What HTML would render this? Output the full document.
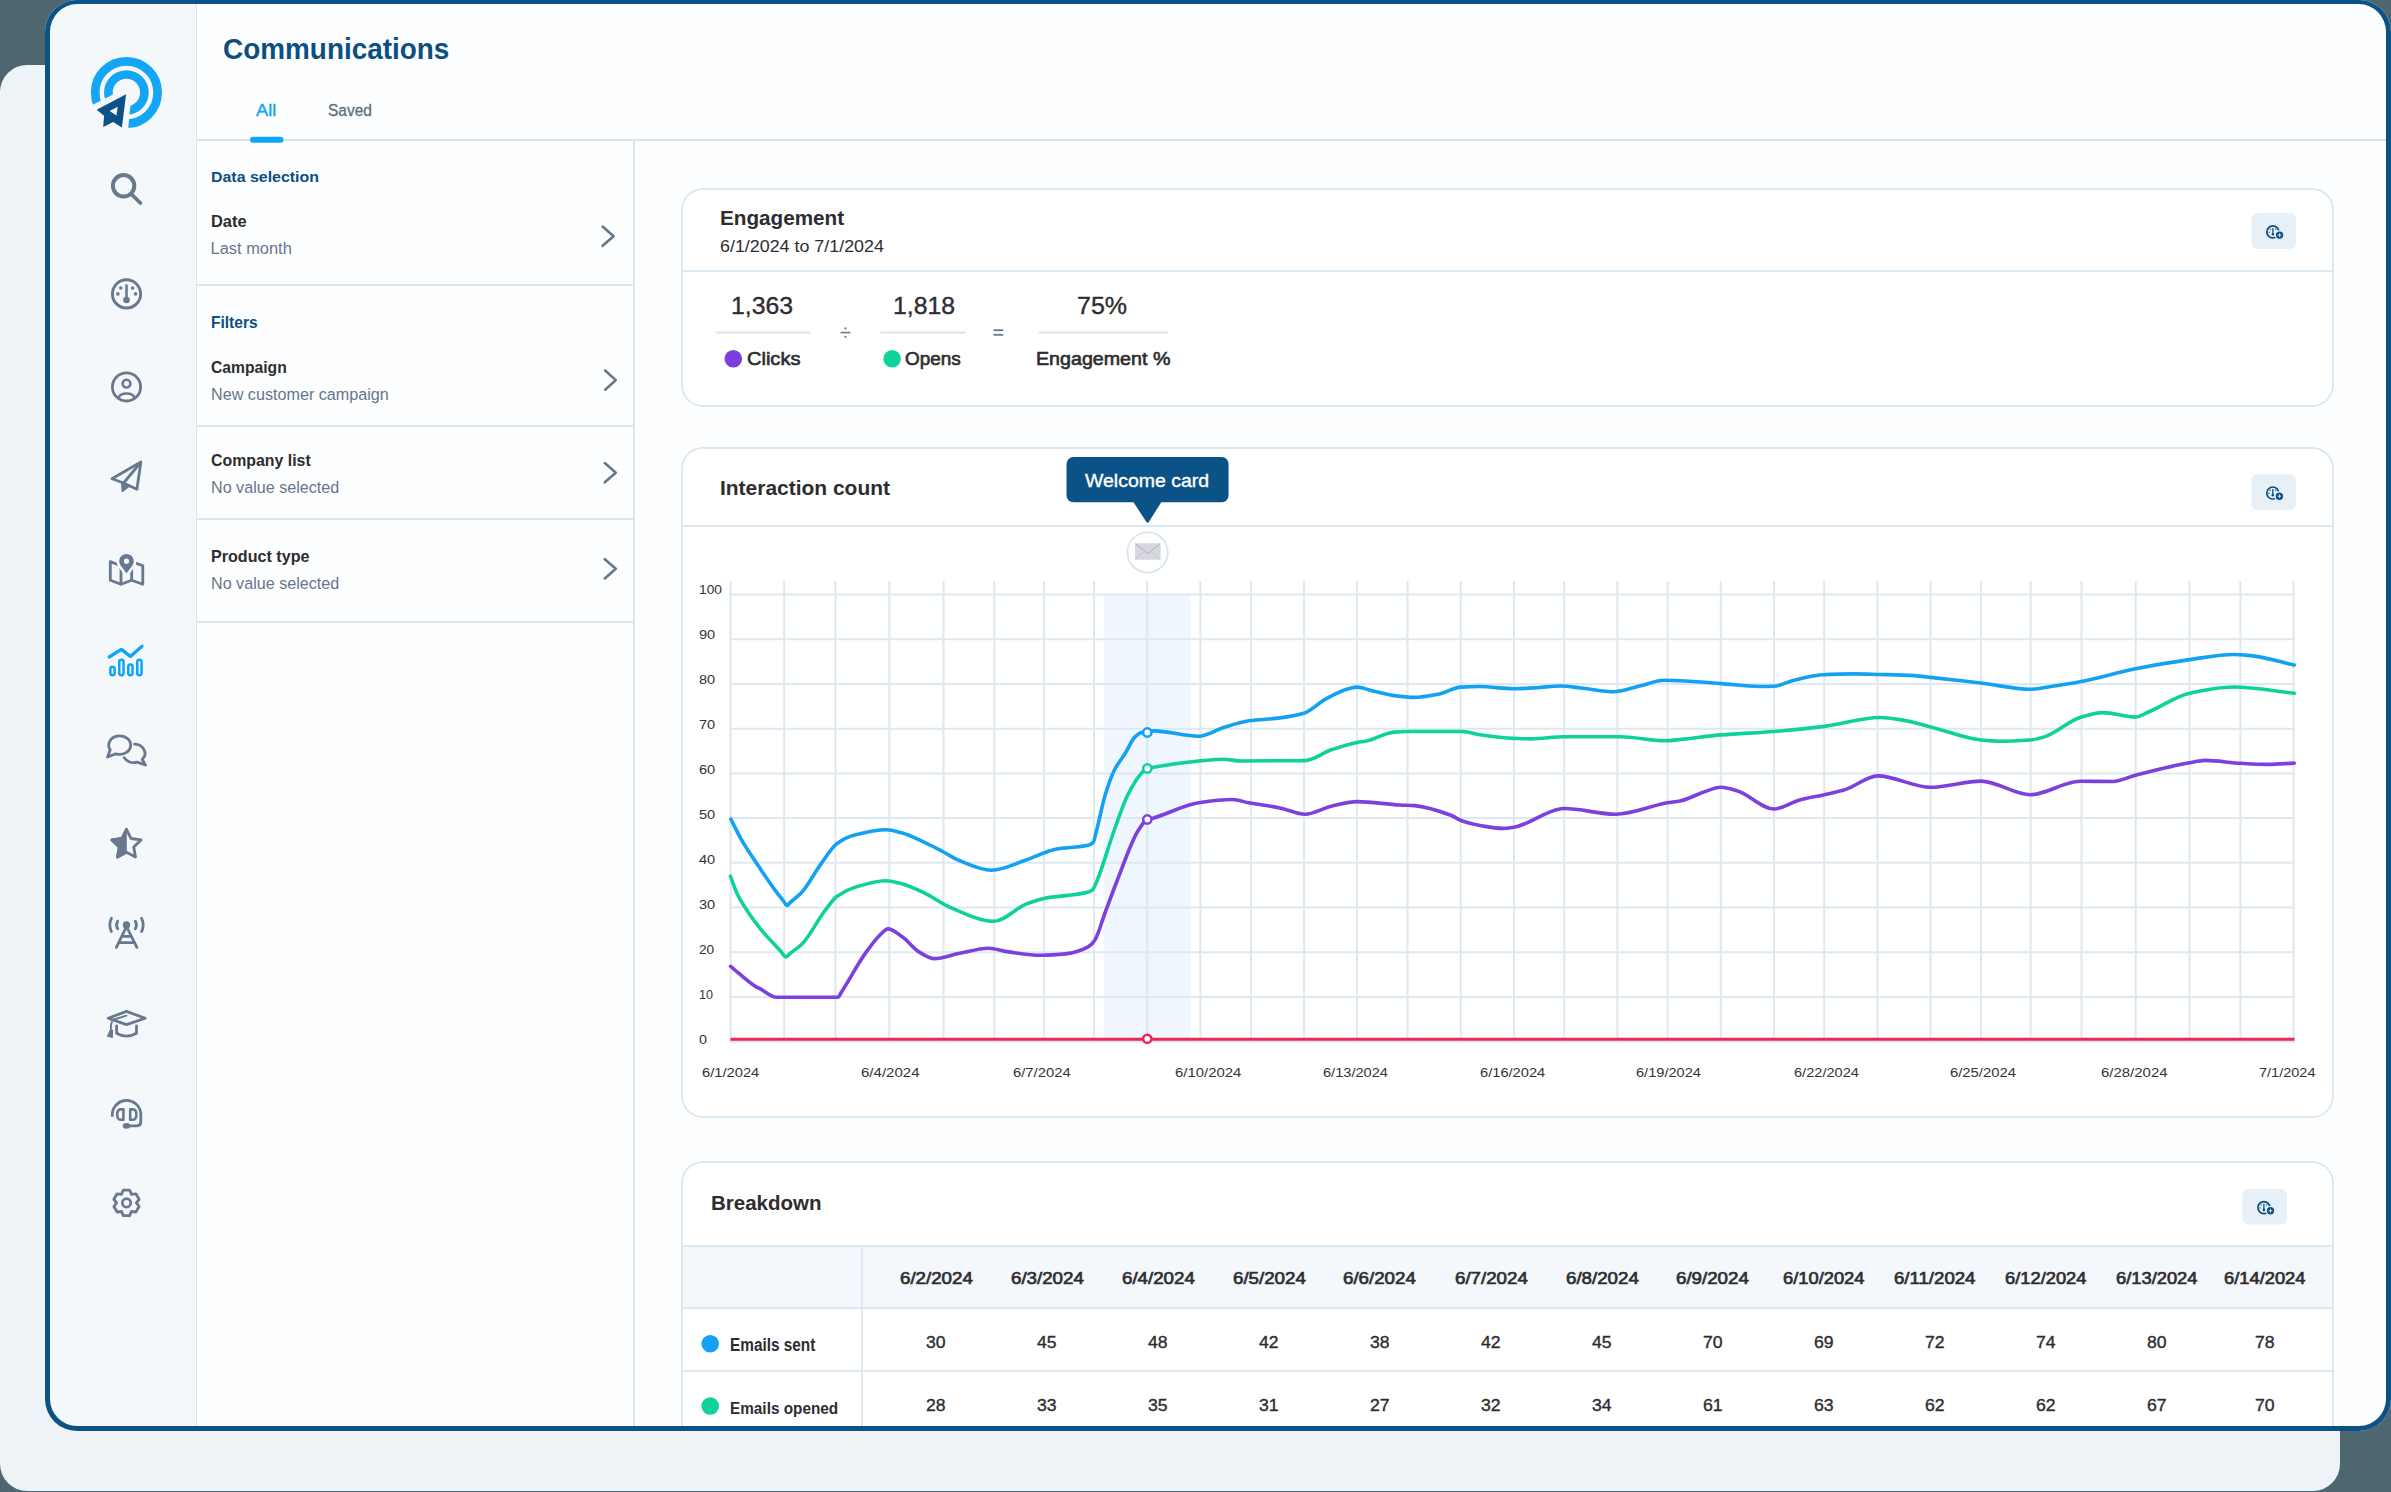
<!DOCTYPE html>
<html><head><meta charset="utf-8"><style>
html,body{margin:0;padding:0}
body{width:2391px;height:1492px;position:relative;overflow:hidden;background:#4d6670;font-family:"Liberation Sans",sans-serif}
.a{position:absolute;box-sizing:border-box}
.t{position:absolute;white-space:pre;line-height:1;transform-origin:0 0}
</style></head><body>
<div class="a" style="left:0;top:65px;width:2340px;height:1426px;background:#eef3f8;border-radius:27px"></div>
<div class="a" style="left:45.2px;top:0;width:2345.8px;height:1430.6px;background:#fdfeff;border-radius:32px"></div>
<div class="a" style="left:50px;top:4px;width:147px;height:1422px;background:#f4f8fb;border-radius:27px 0 0 27px;border-right:1.5px solid #d9e6f0"></div>
<div class="a" style="left:197px;top:139px;width:2190px;height:2px;background:#d9e6f0"></div>
<div class="a" style="left:633px;top:141px;width:1.6px;height:1285px;background:#d9e6f0"></div>
<div class="a" style="left:197px;top:284.4px;width:436px;height:2px;background:#d9e6f0"></div>
<div class="a" style="left:197px;top:424.8px;width:436px;height:2px;background:#d9e6f0"></div>
<div class="a" style="left:197px;top:518px;width:436px;height:2px;background:#d9e6f0"></div>
<div class="a" style="left:197px;top:620.5px;width:436px;height:2px;background:#d9e6f0"></div>
<div class="a" style="left:681px;top:188px;width:1653px;height:219px;border:2px solid #dce8f2;border-radius:22px;background:#fff"></div>
<div class="a" style="left:682px;top:270px;width:1651px;height:2px;background:#dce8f2"></div>
<div class="a" style="left:681px;top:447px;width:1653px;height:671px;border:2px solid #dce8f2;border-radius:22px;background:#fff"></div>
<div class="a" style="left:682px;top:525px;width:1651px;height:2px;background:#dce8f2"></div>
<div class="a" style="left:681px;top:1160.5px;width:1653px;height:265.5px;border:2px solid #dce8f2;border-bottom:0;border-radius:22px 22px 0 0;background:#fff"></div>
<div class="a" style="left:683px;top:1247px;width:1649px;height:61px;background:#f4f7fb"></div>
<div class="a" style="left:682px;top:1245.3px;width:1651px;height:2px;background:#dce8f2"></div>
<div class="a" style="left:682px;top:1307.3px;width:1651px;height:2px;background:#dce8f2"></div>
<div class="a" style="left:682px;top:1369.5px;width:1651px;height:2px;background:#dce8f2"></div>
<div class="a" style="left:861px;top:1246px;width:2px;height:180px;background:#dce8f2"></div>
<svg class="a" style="left:0;top:0" width="2391" height="1492" viewBox="0 0 2391 1492">
<rect x="1104.3" y="594.6" width="86.3" height="447" fill="#eff6fd"/>
<line x1="730.7" y1="581" x2="730.7" y2="1042.6" stroke="#dde8f1" stroke-width="2"/>
<line x1="784.2" y1="581" x2="784.2" y2="1042.6" stroke="#dde8f1" stroke-width="2"/>
<line x1="835.4" y1="581" x2="835.4" y2="1042.6" stroke="#dde8f1" stroke-width="2"/>
<line x1="889.3" y1="581" x2="889.3" y2="1042.6" stroke="#dde8f1" stroke-width="2"/>
<line x1="943.5" y1="581" x2="943.5" y2="1042.6" stroke="#dde8f1" stroke-width="2"/>
<line x1="994.3" y1="581" x2="994.3" y2="1042.6" stroke="#dde8f1" stroke-width="2"/>
<line x1="1043.9" y1="581" x2="1043.9" y2="1042.6" stroke="#dde8f1" stroke-width="2"/>
<line x1="1094" y1="581" x2="1094" y2="1042.6" stroke="#dde8f1" stroke-width="2"/>
<line x1="1147.2" y1="581" x2="1147.2" y2="1042.6" stroke="#dde8f1" stroke-width="2"/>
<line x1="1200.4" y1="581" x2="1200.4" y2="1042.6" stroke="#dde8f1" stroke-width="2"/>
<line x1="1251" y1="581" x2="1251" y2="1042.6" stroke="#dde8f1" stroke-width="2"/>
<line x1="1304.1" y1="581" x2="1304.1" y2="1042.6" stroke="#dde8f1" stroke-width="2"/>
<line x1="1357" y1="581" x2="1357" y2="1042.6" stroke="#dde8f1" stroke-width="2"/>
<line x1="1407.5" y1="581" x2="1407.5" y2="1042.6" stroke="#dde8f1" stroke-width="2"/>
<line x1="1460.7" y1="581" x2="1460.7" y2="1042.6" stroke="#dde8f1" stroke-width="2"/>
<line x1="1514" y1="581" x2="1514" y2="1042.6" stroke="#dde8f1" stroke-width="2"/>
<line x1="1564.2" y1="581" x2="1564.2" y2="1042.6" stroke="#dde8f1" stroke-width="2"/>
<line x1="1617.4" y1="581" x2="1617.4" y2="1042.6" stroke="#dde8f1" stroke-width="2"/>
<line x1="1667.6" y1="581" x2="1667.6" y2="1042.6" stroke="#dde8f1" stroke-width="2"/>
<line x1="1720.8" y1="581" x2="1720.8" y2="1042.6" stroke="#dde8f1" stroke-width="2"/>
<line x1="1774" y1="581" x2="1774" y2="1042.6" stroke="#dde8f1" stroke-width="2"/>
<line x1="1824.2" y1="581" x2="1824.2" y2="1042.6" stroke="#dde8f1" stroke-width="2"/>
<line x1="1877.4" y1="581" x2="1877.4" y2="1042.6" stroke="#dde8f1" stroke-width="2"/>
<line x1="1930.6" y1="581" x2="1930.6" y2="1042.6" stroke="#dde8f1" stroke-width="2"/>
<line x1="1981.1" y1="581" x2="1981.1" y2="1042.6" stroke="#dde8f1" stroke-width="2"/>
<line x1="2030.6" y1="581" x2="2030.6" y2="1042.6" stroke="#dde8f1" stroke-width="2"/>
<line x1="2081.5" y1="581" x2="2081.5" y2="1042.6" stroke="#dde8f1" stroke-width="2"/>
<line x1="2135.7" y1="581" x2="2135.7" y2="1042.6" stroke="#dde8f1" stroke-width="2"/>
<line x1="2189.5" y1="581" x2="2189.5" y2="1042.6" stroke="#dde8f1" stroke-width="2"/>
<line x1="2240.4" y1="581" x2="2240.4" y2="1042.6" stroke="#dde8f1" stroke-width="2"/>
<line x1="2293.6" y1="581" x2="2293.6" y2="1042.6" stroke="#dde8f1" stroke-width="2"/>
<line x1="729.7" y1="594.6" x2="2294.6" y2="594.6" stroke="#dde8f1" stroke-width="2"/>
<line x1="729.7" y1="639.3" x2="2294.6" y2="639.3" stroke="#dde8f1" stroke-width="2"/>
<line x1="729.7" y1="684.0" x2="2294.6" y2="684.0" stroke="#dde8f1" stroke-width="2"/>
<line x1="729.7" y1="728.7" x2="2294.6" y2="728.7" stroke="#dde8f1" stroke-width="2"/>
<line x1="729.7" y1="773.4" x2="2294.6" y2="773.4" stroke="#dde8f1" stroke-width="2"/>
<line x1="729.7" y1="818.1" x2="2294.6" y2="818.1" stroke="#dde8f1" stroke-width="2"/>
<line x1="729.7" y1="862.8" x2="2294.6" y2="862.8" stroke="#dde8f1" stroke-width="2"/>
<line x1="729.7" y1="907.5" x2="2294.6" y2="907.5" stroke="#dde8f1" stroke-width="2"/>
<line x1="729.7" y1="952.2" x2="2294.6" y2="952.2" stroke="#dde8f1" stroke-width="2"/>
<line x1="729.7" y1="996.9" x2="2294.6" y2="996.9" stroke="#dde8f1" stroke-width="2"/>
<line x1="729.7" y1="1041.6" x2="2294.6" y2="1041.6" stroke="#dde8f1" stroke-width="2"/>
<line x1="730.5" y1="1039.3" x2="2294.5" y2="1039.3" stroke="#f1245a" stroke-width="3"/>
<path d="M730.6,966.3 C738.8,972.9 747.0,981.2 755.2,986.2 C756.8,987.2 758.4,987.9 760.0,988.7 C765.6,991.6 771.1,997.3 776.7,997.3 C797.1,997.3 817.4,997.3 837.8,997.3 C839.0,997.3 840.3,993.9 841.5,992.0 C849.2,980.4 856.9,965.2 864.6,954.4 C869.7,947.2 874.9,939.8 880.0,935.0 C882.7,932.5 885.3,928.9 888.0,928.9 C892.7,928.9 897.5,933.6 902.2,936.8 C907.8,940.6 913.3,948.6 918.9,951.9 C924.0,954.9 929.1,958.6 934.2,958.6 C942.3,958.6 950.4,955.2 958.5,953.6 C968.5,951.7 978.6,948.2 988.6,948.2 C995.3,948.2 1001.9,951.0 1008.6,951.9 C1019.2,953.4 1029.8,955.3 1040.4,955.3 C1049.3,955.3 1058.3,954.6 1067.2,953.6 C1074.2,952.8 1081.1,950.6 1088.1,946.9 C1090.3,945.7 1092.6,943.4 1094.8,940.2 C1098.1,935.5 1101.5,922.4 1104.8,913.5 C1109.0,902.3 1113.2,890.6 1117.4,880.0 C1124.4,862.3 1131.5,840.7 1138.5,830.0 C1141.4,825.5 1144.4,820.7 1147.3,819.5 C1149.4,818.7 1151.5,818.5 1153.6,817.9 C1168.6,813.7 1183.7,805.0 1198.7,802.8 C1209.9,801.1 1221.0,799.5 1232.2,799.5 C1237.8,799.5 1243.3,801.8 1248.9,802.8 C1259.3,804.7 1269.6,805.8 1280.0,807.9 C1288.4,809.6 1296.7,814.2 1305.1,814.2 C1313.8,814.2 1322.6,808.2 1331.3,806.2 C1340.0,804.3 1348.6,801.6 1357.3,801.6 C1371.4,801.6 1385.6,804.3 1399.7,805.0 C1404.6,805.3 1409.6,805.3 1414.5,805.6 C1426.6,806.4 1438.8,810.8 1450.9,815.3 C1454.7,816.7 1458.5,819.7 1462.3,821.0 C1468.2,823.0 1474.1,824.5 1480.0,825.5 C1487.6,826.8 1495.2,828.4 1502.8,828.4 C1506.4,828.4 1510.0,827.8 1513.6,827.3 C1529.0,825.1 1544.4,811.3 1559.8,809.0 C1561.3,808.8 1562.8,808.5 1564.3,808.5 C1581.4,808.5 1598.5,814.2 1615.6,814.2 C1632.9,814.2 1650.2,805.7 1667.5,802.8 C1671.7,802.1 1675.8,801.8 1680.0,801.0 C1687.6,799.5 1695.2,794.9 1702.8,792.5 C1708.9,790.5 1714.9,787.3 1721.0,787.3 C1726.3,787.3 1731.7,789.2 1737.0,790.7 C1749.3,794.2 1761.7,809.0 1774.0,809.0 C1782.6,809.0 1791.1,802.2 1799.7,799.9 C1808.0,797.7 1816.2,796.6 1824.5,794.7 C1831.4,793.1 1838.3,791.7 1845.2,789.6 C1856.0,786.3 1866.9,775.9 1877.7,775.9 C1895.4,775.9 1913.0,787.3 1930.7,787.3 C1947.4,787.3 1964.2,781.1 1980.9,781.1 C1997.4,781.1 2013.9,794.7 2030.4,794.7 C2046.9,794.7 2063.5,781.3 2080.0,781.3 C2091.0,781.3 2102.0,781.5 2113.0,781.5 C2120.5,781.5 2128.1,777.1 2135.6,775.2 C2153.6,770.6 2171.6,765.8 2189.6,762.7 C2194.8,761.8 2200.1,760.4 2205.3,760.4 C2217.1,760.4 2228.8,762.7 2240.6,763.3 C2249.7,763.8 2258.9,764.4 2268.0,764.4 C2276.7,764.4 2285.5,763.5 2294.2,763.1" fill="none" stroke="#7b40dd" stroke-width="3.6" stroke-linejoin="round" stroke-linecap="round"/>
<path d="M730.4,876.1 C732.8,882.2 735.1,889.6 737.5,894.5 C740.6,900.8 743.6,905.3 746.7,910.0 C751.1,916.8 755.6,922.9 760.0,928.4 C767.0,937.1 774.0,943.8 781.0,951.5 C782.6,953.3 784.3,956.9 785.9,956.9 C787.3,956.9 788.6,954.6 790.0,953.5 C793.9,950.3 797.9,948.2 801.8,944.3 C809.7,936.6 817.5,920.1 825.4,910.0 C829.3,905.0 833.2,899.0 837.1,896.2 C843.0,892.0 848.8,889.2 854.7,887.4 C865.0,884.2 875.3,880.7 885.6,880.7 C890.6,880.7 895.7,882.3 900.7,883.6 C908.8,885.6 916.9,889.5 925.0,893.3 C933.4,897.2 941.7,903.8 950.1,907.3 C964.8,913.4 979.5,921.3 994.2,921.3 C1004.6,921.3 1015.0,908.5 1025.4,904.4 C1031.2,902.1 1037.1,900.0 1042.9,898.7 C1058.1,895.4 1073.3,896.2 1088.5,892.0 C1089.9,891.6 1091.3,890.9 1092.7,889.7 C1094.2,888.4 1095.8,883.7 1097.3,880.0 C1103.0,866.5 1108.6,845.6 1114.3,830.0 C1118.7,817.8 1123.2,804.1 1127.6,795.3 C1132.4,785.9 1137.1,777.4 1141.9,772.7 C1143.7,770.9 1145.5,769.1 1147.3,768.5 C1149.4,767.8 1151.5,767.7 1153.6,767.3 C1168.6,764.8 1183.7,762.3 1198.7,761.0 C1207.1,760.3 1215.4,759.3 1223.8,759.3 C1229.4,759.3 1235.0,761.0 1240.6,761.0 C1262.1,761.0 1283.6,760.9 1305.1,760.6 C1313.8,760.5 1322.6,752.7 1331.3,749.8 C1340.0,746.9 1348.6,744.0 1357.3,742.4 C1360.0,741.9 1362.8,741.7 1365.5,741.2 C1375.0,739.4 1384.5,732.8 1394.0,732.1 C1398.5,731.8 1403.1,731.5 1407.6,731.5 C1425.8,731.5 1444.1,731.5 1462.3,731.5 C1468.2,731.5 1474.1,733.9 1480.0,734.7 C1491.2,736.3 1502.4,737.9 1513.6,738.4 C1519.5,738.6 1525.4,738.9 1531.3,738.9 C1542.3,738.9 1553.3,736.7 1564.3,736.7 C1582.9,736.7 1601.6,736.7 1620.2,736.7 C1635.0,736.7 1649.8,740.7 1664.6,740.7 C1669.7,740.7 1674.9,740.0 1680.0,739.5 C1693.7,738.3 1707.3,736.0 1721.0,734.9 C1738.7,733.4 1756.3,732.9 1774.0,731.5 C1790.8,730.2 1807.7,728.5 1824.5,726.4 C1843.0,724.1 1861.5,717.5 1880.0,717.5 C1887.6,717.5 1895.2,718.9 1902.8,720.1 C1912.1,721.5 1921.4,724.6 1930.7,726.9 C1947.4,731.1 1964.2,738.4 1980.9,740.0 C1987.2,740.6 1993.4,741.2 1999.7,741.2 C2009.9,741.2 2020.2,740.7 2030.4,740.0 C2035.3,739.6 2040.3,738.1 2045.2,736.6 C2056.8,733.0 2068.4,721.0 2080.0,717.5 C2087.6,715.2 2095.2,712.6 2102.8,712.6 C2113.7,712.6 2124.7,717.1 2135.6,717.1 C2139.9,717.1 2144.1,713.8 2148.4,712.0 C2162.1,706.2 2175.9,696.2 2189.6,693.2 C2204.3,690.0 2219.1,687.0 2233.8,687.0 C2253.9,687.0 2274.1,691.1 2294.2,693.2" fill="none" stroke="#0fd29a" stroke-width="3.6" stroke-linejoin="round" stroke-linecap="round"/>
<path d="M730.9,819.2 C734.5,826.2 738.1,834.0 741.7,840.2 C747.3,849.9 752.9,857.7 758.5,866.1 C764.1,874.4 769.6,882.8 775.2,890.3 C778.0,894.1 780.7,897.4 783.5,901.0 C784.6,902.5 785.8,905.4 786.9,905.4 C788.1,905.4 789.3,903.3 790.5,902.2 C794.3,898.8 798.2,896.2 802.0,892.0 C808.4,885.0 814.8,872.3 821.2,863.6 C826.5,856.4 831.8,847.2 837.1,843.5 C843.0,839.4 848.8,836.6 854.7,835.1 C865.3,832.3 875.8,829.7 886.4,829.7 C891.2,829.7 895.9,831.3 900.7,832.6 C908.8,834.7 916.9,838.9 925.0,842.6 C930.6,845.1 936.1,848.1 941.7,851.0 C947.3,853.9 952.9,857.9 958.5,860.2 C969.5,864.6 980.5,870.2 991.5,870.2 C1002.8,870.2 1014.1,864.1 1025.4,860.2 C1031.5,858.1 1037.7,855.1 1043.8,853.0 C1047.7,851.6 1051.6,850.1 1055.5,849.3 C1066.7,847.1 1077.8,847.9 1089.0,845.1 C1090.4,844.8 1091.7,844.0 1093.1,842.6 C1094.3,841.3 1095.5,834.5 1096.7,830.0 C1099.5,819.5 1102.3,804.5 1105.1,795.3 C1108.2,785.2 1111.2,776.3 1114.3,770.2 C1117.9,763.0 1121.5,759.3 1125.1,753.5 C1128.5,748.1 1131.8,739.7 1135.2,736.7 C1137.4,734.7 1139.7,732.5 1141.9,732.5 C1143.7,732.5 1145.5,732.5 1147.3,732.5 C1149.4,732.5 1151.5,730.9 1153.6,730.9 C1168.6,730.9 1183.7,736.3 1198.7,736.3 C1207.1,736.3 1215.4,730.0 1223.8,727.5 C1232.2,725.0 1240.5,722.0 1248.9,720.8 C1259.3,719.3 1269.6,719.2 1280.0,717.9 C1288.0,716.9 1295.9,715.7 1303.9,713.3 C1311.1,711.1 1318.4,703.0 1325.6,699.1 C1333.2,695.0 1340.8,690.7 1348.4,688.8 C1351.4,688.0 1354.3,687.1 1357.3,687.1 C1361.9,687.1 1366.6,689.4 1371.2,690.5 C1378.8,692.3 1386.4,694.6 1394.0,695.6 C1400.8,696.5 1407.7,697.4 1414.5,697.4 C1422.8,697.4 1431.2,695.5 1439.5,693.9 C1446.5,692.5 1453.6,687.5 1460.6,687.1 C1467.1,686.7 1473.5,686.5 1480.0,686.5 C1491.2,686.5 1502.4,688.8 1513.6,688.8 C1521.4,688.8 1529.2,688.2 1537.0,687.7 C1544.6,687.3 1552.2,686.0 1559.8,686.0 C1567.4,686.0 1575.0,687.4 1582.6,688.2 C1593.2,689.3 1603.9,691.7 1614.5,691.7 C1622.8,691.7 1631.2,687.9 1639.5,686.0 C1647.9,684.1 1656.2,680.3 1664.6,680.3 C1669.7,680.3 1674.9,680.6 1680.0,680.8 C1693.7,681.4 1707.3,682.6 1721.0,683.6 C1733.9,684.5 1746.9,686.5 1759.8,686.5 C1764.5,686.5 1769.3,686.4 1774.0,686.2 C1780.7,685.9 1787.3,681.8 1794.0,680.2 C1803.5,678.0 1813.0,675.3 1822.5,674.8 C1833.1,674.3 1843.8,673.9 1854.4,673.9 C1862.9,673.9 1871.5,674.3 1880.0,674.5 C1891.4,674.8 1902.8,675.0 1914.2,675.6 C1919.7,675.9 1925.2,676.8 1930.7,677.4 C1947.4,679.2 1964.2,681.0 1980.9,683.0 C1997.4,685.0 2013.9,689.3 2030.4,689.3 C2037.2,689.3 2044.1,687.5 2050.9,686.5 C2060.6,685.1 2070.3,683.6 2080.0,681.8 C2098.5,678.3 2117.1,672.3 2135.6,668.7 C2153.6,665.2 2171.6,662.1 2189.6,659.6 C2204.3,657.6 2219.1,654.5 2233.8,654.5 C2239.5,654.5 2245.2,655.1 2250.9,655.6 C2265.3,656.9 2279.8,661.9 2294.2,665.1" fill="none" stroke="#13a1f4" stroke-width="3.6" stroke-linejoin="round" stroke-linecap="round"/>
<circle cx="1147.3" cy="732.5" r="4.15" fill="#fff" stroke="#13a1f4" stroke-width="2.5"/>
<circle cx="1147.3" cy="768.5" r="4.15" fill="#fff" stroke="#0fd29a" stroke-width="2.5"/>
<circle cx="1147.3" cy="819.5" r="4.15" fill="#fff" stroke="#7b40dd" stroke-width="2.5"/>
<circle cx="1147.3" cy="1038.8" r="4.15" fill="#fff" stroke="#f1245a" stroke-width="2.5"/>
<rect x="1066.5" y="457" width="162.1" height="45.3" rx="7" fill="#0b5286"/>
<path d="M1132.7,501 L1162,501 L1148.8,522 Q1147.6,523.6 1146.4,522 Z" fill="#0b5286"/>
<circle cx="1147.6" cy="552.4" r="20.2" fill="#fff" stroke="#d3e4f1" stroke-width="1.6"/>
<rect x="1135" y="543.2" width="25.6" height="16.6" fill="#d7d7df"/>
<path d="M1135.5,543.8 L1147.8,553.5 L1160.1,543.8" fill="none" stroke="#a9a9b6" stroke-width="0.9"/>
<path d="M1135.5,559.3 L1143,552 M1160.1,559.3 L1152.6,552" fill="none" stroke="#b9b9c4" stroke-width="0.7"/>
<circle cx="126.4" cy="92.5" r="31.2" fill="none" stroke="#12a6f5" stroke-width="8.7"/>
<circle cx="126.4" cy="92.5" r="18" fill="none" stroke="#12a6f5" stroke-width="8.7"/>
<polygon points="132.5,84.6 60,121.6 60,165 124.6,165" fill="#f4f8fb"/>
<polygon points="126.1,94.3 96.6,109.7 104.1,115.7 103.2,126.9 113.2,122.1 121.9,127.5" fill="#0b5286"/>
<polygon points="109.6,110.9 117.7,106.7 116.5,115.4" fill="#f4f8fb"/>
<g fill="none" stroke="#67788f" stroke-linecap="round" stroke-linejoin="round">
<circle cx="123.6" cy="185.8" r="10.7" stroke-width="4"/>
<line x1="132.3" y1="195" x2="140.4" y2="203" stroke-width="3.8"/>
<circle cx="126.5" cy="293.9" r="14.1" stroke-width="2.9"/>
<line x1="126.5" y1="285.6" x2="126.5" y2="299" stroke-width="2.6"/>
</g>
<g fill="#67788f">
<circle cx="126.5" cy="300" r="3.3"/>
<circle cx="120.8" cy="288" r="1.8"/>
<circle cx="132.6" cy="288" r="1.8"/>
<circle cx="117.9" cy="293.9" r="1.8"/>
<circle cx="135.6" cy="293.9" r="1.8"/>
</g>
<clipPath id="uc"><circle cx="126.5" cy="386.9" r="14"/></clipPath>
<g fill="none" stroke="#67788f">
<circle cx="126.5" cy="386.9" r="14.1" stroke-width="2.8"/>
<circle cx="126.5" cy="383.6" r="3.9" stroke-width="2.6"/>
<ellipse cx="126.5" cy="397.6" rx="7.6" ry="4.1" stroke-width="2.6" clip-path="url(#uc)"/>
</g>
<g fill="none" stroke="#67788f" stroke-width="2.8" stroke-linejoin="round" stroke-linecap="round">
<polygon points="140.9,462 112,478.8 123.6,483 136.9,489.2"/>
<line x1="140.6" y1="462.5" x2="123.6" y2="483"/>
</g>
<polygon points="121.6,482.3 122.4,491.5 129.2,486.2" fill="#67788f" stroke="#67788f" stroke-width="1.5" stroke-linejoin="round"/>
<g fill="none" stroke="#67788f" stroke-width="2.8" stroke-linejoin="round" stroke-linecap="round">
<path d="M110.3,561.6 L121,565.8 L131.7,561.6 L142.8,565.8 L142.8,584.3 L131.7,580.3 L121,584.3 L110.3,580.3 Z"/>
<line x1="121" y1="566" x2="121" y2="584"/><line x1="131.7" y1="562" x2="131.7" y2="580"/>
</g>
<path d="M126.5,575.5 L119.62,566.36 A8.6,8.6 0 1 1 133.38,566.36 Z" fill="#67788f" stroke="#f4f8fb" stroke-width="2.6" stroke-linejoin="round"/>
<circle cx="126.5" cy="561.2" r="2.6" fill="#f4f8fb"/>
<g fill="none" stroke="#0fa5f5" stroke-linejoin="round">
<polyline points="109.2,657 121.4,649.4 130.4,656.4 142,646.3" stroke-width="3.3" stroke-linecap="round"/>
<rect x="110.35" y="666.65" width="4.3" height="8.60" rx="2.15" stroke-width="2.5"/>
<rect x="119.25" y="659.65" width="4.3" height="15.60" rx="2.15" stroke-width="2.5"/>
<rect x="128.25" y="664.45" width="4.3" height="10.80" rx="2.15" stroke-width="2.5"/>
<rect x="137.25" y="659.65" width="4.3" height="15.60" rx="2.15" stroke-width="2.5"/>
</g>
<g fill="none" stroke="#67788f" stroke-width="2.8" stroke-linecap="round" stroke-linejoin="round">
<path d="M107.6,757 L110.2,749.8 A11,9.2 0 1 1 115.9,753.8 Z"/>
<path d="M134.6,744.2 A10.6,9.2 0 0 1 142.2,759.6 L145.5,765 L137,762.2 A10.6,9.2 0 0 1 124.2,757.6"/>
</g>
<polygon points="126.5,829.3 131.0,838.5 141.1,839.9 133.7,846.9 135.5,857.0 126.5,852.2 117.5,857.0 119.3,846.9 111.9,839.9 122.0,838.5" fill="none" stroke="#67788f" stroke-width="2.8" stroke-linejoin="round"/>
<clipPath id="sl"><rect x="100" y="820" width="26.8" height="50"/></clipPath>
<polygon points="126.5,829.3 131.0,838.5 141.1,839.9 133.7,846.9 135.5,857.0 126.5,852.2 117.5,857.0 119.3,846.9 111.9,839.9 122.0,838.5" fill="#67788f" stroke="#67788f" stroke-width="2.8" stroke-linejoin="round" clip-path="url(#sl)"/>
<g fill="none" stroke="#67788f" stroke-width="2.8" stroke-linecap="round" stroke-linejoin="round">
<path d="M111.4,918.3 Q108.2,924.9 111.4,931.5"/><path d="M117.7,921.3 Q115.4,925.1 117.7,928.9"/>
<path d="M135.3,921.3 Q137.6,925.1 135.3,928.9"/><path d="M141.6,918.3 Q144.8,924.9 141.6,931.5"/>
<path d="M116.4,947.4 L126.5,926.5 L136.9,947.4"/><line x1="122.4" y1="936.4" x2="130.6" y2="936.4"/><line x1="119.3" y1="942.6" x2="133.7" y2="942.6"/>
</g>
<circle cx="126.5" cy="924.9" r="3.7" fill="#67788f"/>
<g fill="none" stroke="#67788f" stroke-width="2.8" stroke-linecap="round" stroke-linejoin="round">
<path d="M126.5,1011.4 L108.2,1018.2 L126.5,1024.6 L145.2,1018.2 Z"/>
<path d="M116.6,1026 L116.6,1033.2 Q126.5,1039 136.5,1033.2 L136.5,1026"/>
</g>
<path d="M112.5,1020 L126.4,1015.6" stroke="#67788f" stroke-width="2" stroke-linecap="round"/>
<path d="M112.2,1021 Q110.2,1025 110.9,1030" fill="none" stroke="#67788f" stroke-width="1.8"/>
<polygon points="110.6,1029.3 107.4,1036.2 112.4,1037.4 112.6,1030" fill="#67788f" stroke="#67788f" stroke-width="1" stroke-linejoin="round"/>
<g fill="none" stroke="#67788f" stroke-width="2.8" stroke-linecap="round" stroke-linejoin="round">
<path d="M112.3,1115.6 A14.3,14.3 0 0 1 140.8,1113.3 L140.8,1122 Q140.8,1125.8 137,1125.8 L127,1125.8"/>
<path d="M123.4,1109.4 L120.6,1109.4 Q117.2,1109.4 117.2,1114.6 Q117.2,1119.8 120.6,1119.8 L123.4,1119.8 Z" stroke-width="2.6"/>
<path d="M130.2,1109.4 L133,1109.4 Q136.4,1109.4 136.4,1114.6 Q136.4,1119.8 133,1119.8 L130.2,1119.8 Z" stroke-width="2.6"/>
</g>
<ellipse cx="126.5" cy="1125.8" rx="3.8" ry="2.9" fill="#67788f"/>
<polygon points="121.5,1194.3 123.3,1190.2 129.7,1190.2 131.4,1194.3 135.9,1193.8 139.1,1199.3 136.4,1202.9 139.1,1206.5 135.9,1212.0 131.4,1211.5 129.7,1215.6 123.3,1215.6 121.5,1211.5 117.1,1212.0 113.9,1206.5 116.6,1202.9 113.9,1199.3 117.1,1193.8" fill="none" stroke="#67788f" stroke-width="2.8" stroke-linejoin="round"/>
<circle cx="126.5" cy="1202.9" r="4.2" fill="none" stroke="#67788f" stroke-width="2.7"/>
<path d="M602.6,226.6 L613.6,236.2 L602.6,245.79999999999998" fill="none" stroke="#66768b" stroke-width="2.6" stroke-linecap="round" stroke-linejoin="round"/>
<path d="M605.2,370.5 L615.8,380.1 L605.2,389.70000000000005" fill="none" stroke="#66768b" stroke-width="2.6" stroke-linecap="round" stroke-linejoin="round"/>
<path d="M604.8,463.09999999999997 L615.8,472.7 L604.8,482.3" fill="none" stroke="#66768b" stroke-width="2.6" stroke-linecap="round" stroke-linejoin="round"/>
<path d="M604.8,559.1999999999999 L615.8,568.8 L604.8,578.4" fill="none" stroke="#66768b" stroke-width="2.6" stroke-linecap="round" stroke-linejoin="round"/>
<line x1="716.5" y1="332.6" x2="809.8" y2="332.6" stroke="#dce8f2" stroke-width="2.2" stroke-linecap="round"/>
<line x1="881.3" y1="332.6" x2="964.9" y2="332.6" stroke="#dce8f2" stroke-width="2.2" stroke-linecap="round"/>
<line x1="1038.9" y1="332.6" x2="1167.4" y2="332.6" stroke="#dce8f2" stroke-width="2.2" stroke-linecap="round"/>
<line x1="840.6" y1="332.6" x2="850.4" y2="332.6" stroke="#67788f" stroke-width="1.6"/><circle cx="845.5" cy="328.4" r="1.1" fill="#67788f"/><circle cx="845.5" cy="336.8" r="1.1" fill="#67788f"/>
<line x1="993.4" y1="330.2" x2="1003.2" y2="330.2" stroke="#67788f" stroke-width="1.8"/><line x1="993.4" y1="334.8" x2="1003.2" y2="334.8" stroke="#67788f" stroke-width="1.8"/>
<circle cx="733.3" cy="358.7" r="8.8" fill="#7b3fe0"/><circle cx="892.1" cy="358.7" r="8.8" fill="#0fd39a"/>
<circle cx="710.2" cy="1343.7" r="8.8" fill="#13a1f4"/><circle cx="710.2" cy="1406" r="8.8" fill="#0fd39a"/>
<rect x="250" y="136.7" width="33.5" height="6" rx="3" fill="#12a4f5"/>
<rect x="2251.5" y="213" width="44.5" height="36.0" rx="6" fill="#e8f0f7"/><circle cx="2272.9" cy="231.9" r="6" fill="none" stroke="#0b4f82" stroke-width="1.7"/><line x1="2272.9" y1="228.0" x2="2272.9" y2="234.0" stroke="#0b4f82" stroke-width="1.3"/><circle cx="2272.9" cy="234.2" r="1.3" fill="#0b4f82"/><circle cx="2270.2" cy="229.2" r="0.7" fill="#0b4f82"/><circle cx="2275.8" cy="229.2" r="0.7" fill="#0b4f82"/><circle cx="2269.2" cy="232.2" r="0.7" fill="#0b4f82"/><circle cx="2279.6" cy="235.1" r="4.3" fill="#0b4f82" stroke="#e8f0f7" stroke-width="1.2"/><path d="M2279.6,233.2 L2279.6,237.0 M2277.7,235.1 L2281.4,235.1" stroke="#cfe3f3" stroke-width="1"/>
<rect x="2251.3" y="474.2" width="44.5" height="35.8" rx="6" fill="#e8f0f7"/><circle cx="2272.8" cy="493.0" r="6" fill="none" stroke="#0b4f82" stroke-width="1.7"/><line x1="2272.8" y1="489.1" x2="2272.8" y2="495.1" stroke="#0b4f82" stroke-width="1.3"/><circle cx="2272.8" cy="495.3" r="1.3" fill="#0b4f82"/><circle cx="2270.1" cy="490.3" r="0.7" fill="#0b4f82"/><circle cx="2275.7" cy="490.3" r="0.7" fill="#0b4f82"/><circle cx="2269.0" cy="493.3" r="0.7" fill="#0b4f82"/><circle cx="2279.4" cy="496.2" r="4.3" fill="#0b4f82" stroke="#e8f0f7" stroke-width="1.2"/><path d="M2279.4,494.3 L2279.4,498.1 M2277.5,496.2 L2281.2,496.2" stroke="#cfe3f3" stroke-width="1"/>
<rect x="2242.4" y="1188.9" width="44.6" height="35.6" rx="6" fill="#e8f0f7"/><circle cx="2263.9" cy="1207.6" r="6" fill="none" stroke="#0b4f82" stroke-width="1.7"/><line x1="2263.9" y1="1203.7" x2="2263.9" y2="1209.7" stroke="#0b4f82" stroke-width="1.3"/><circle cx="2263.9" cy="1209.9" r="1.3" fill="#0b4f82"/><circle cx="2261.2" cy="1204.9" r="0.7" fill="#0b4f82"/><circle cx="2266.8" cy="1204.9" r="0.7" fill="#0b4f82"/><circle cx="2260.1" cy="1207.9" r="0.7" fill="#0b4f82"/><circle cx="2270.5" cy="1210.8" r="4.3" fill="#0b4f82" stroke="#e8f0f7" stroke-width="1.2"/><path d="M2270.5,1208.9 L2270.5,1212.7 M2268.6,1210.8 L2272.4,1210.8" stroke="#cfe3f3" stroke-width="1"/>
</svg>
<span class="t" style="left:223.3px;top:35.00px;font-size:28.63px;font-weight:700;color:#0c4f80;transform:scaleX(0.975)">Communications</span><span class="t" style="left:255.8px;top:102.00px;font-size:16.13px;font-weight:400;-webkit-text-stroke:0.35px #12a4f5;color:#12a4f5;transform:scaleX(1.133)">All</span><span class="t" style="left:327.6px;top:102.00px;font-size:16.13px;font-weight:400;-webkit-text-stroke:0.35px #5f7085;color:#5f7085;transform:scaleX(0.960)">Saved</span><span class="t" style="left:210.6px;top:169.00px;font-size:15.55px;font-weight:700;color:#0c4f80;transform:scaleX(1.024)">Data selection</span><span class="t" style="left:210.6px;top:213.00px;font-size:16.42px;font-weight:700;color:#2d2d2f;transform:scaleX(1.001)">Date</span><span class="t" style="left:210.6px;top:240.00px;font-size:16.42px;font-weight:400;color:#66768b;transform:scaleX(1.000)">Last month</span><span class="t" style="left:210.6px;top:315.00px;font-size:15.84px;font-weight:700;color:#0c4f80;transform:scaleX(0.981)">Filters</span><span class="t" style="left:210.6px;top:359.00px;font-size:16.13px;font-weight:700;color:#2d2d2f;transform:scaleX(0.972)">Campaign</span><span class="t" style="left:210.6px;top:386.00px;font-size:16.13px;font-weight:400;color:#66768b;transform:scaleX(1.003)">New customer campaign</span><span class="t" style="left:210.5px;top:453.00px;font-size:15.70px;font-weight:700;color:#2d2d2f;transform:scaleX(1.012)">Company list</span><span class="t" style="left:210.5px;top:479.00px;font-size:16.13px;font-weight:400;color:#66768b;transform:scaleX(1.002)">No value selected</span><span class="t" style="left:210.5px;top:548.00px;font-size:16.28px;font-weight:700;color:#2d2d2f;transform:scaleX(0.990)">Product type</span><span class="t" style="left:210.5px;top:575.00px;font-size:16.13px;font-weight:400;color:#66768b;transform:scaleX(1.002)">No value selected</span><span class="t" style="left:720.2px;top:208.00px;font-size:20.06px;font-weight:700;color:#2d2d2f;transform:scaleX(1.032)">Engagement</span><span class="t" style="left:720.2px;top:238.00px;font-size:16.42px;font-weight:400;color:#2d2d2f;transform:scaleX(1.089)">6/1/2024 to 7/1/2024</span><span class="t" style="left:731.0px;top:295.00px;font-size:23.69px;font-weight:400;-webkit-text-stroke:0.35px #2d2d2f;color:#2d2d2f;transform:scaleX(1.046)">1,363</span><span class="t" style="left:892.9px;top:295.00px;font-size:23.69px;font-weight:400;-webkit-text-stroke:0.35px #2d2d2f;color:#2d2d2f;transform:scaleX(1.046)">1,818</span><span class="t" style="left:1076.6px;top:295.00px;font-size:23.69px;font-weight:400;-webkit-text-stroke:0.35px #2d2d2f;color:#2d2d2f;transform:scaleX(1.056)">75%</span><span class="t" style="left:746.6px;top:349.00px;font-size:19.19px;font-weight:400;-webkit-text-stroke:0.65px #2d2d2f;color:#2d2d2f;transform:scaleX(1.044)">Clicks</span><span class="t" style="left:905.4px;top:349.00px;font-size:19.19px;font-weight:400;-webkit-text-stroke:0.65px #2d2d2f;color:#2d2d2f;transform:scaleX(0.986)">Opens</span><span class="t" style="left:1035.7px;top:349.00px;font-size:19.19px;font-weight:400;-webkit-text-stroke:0.65px #2d2d2f;color:#2d2d2f;transform:scaleX(1.024)">Engagement %</span><span class="t" style="left:720.0px;top:478.00px;font-size:20.20px;font-weight:700;color:#2d2d2f;transform:scaleX(1.038)">Interaction count</span><span class="t" style="left:1085.3px;top:472.00px;font-size:18.31px;font-weight:400;-webkit-text-stroke:0.35px #ffffff;color:#ffffff;transform:scaleX(1.064)">Welcome card</span><span class="t" style="left:699.0px;top:584.00px;font-size:12.50px;font-weight:400;color:#333336;transform:scaleX(1.103)">100</span><span class="t" style="left:699.0px;top:629.00px;font-size:12.50px;font-weight:400;color:#333336;transform:scaleX(1.165)">90</span><span class="t" style="left:699.0px;top:674.00px;font-size:12.50px;font-weight:400;color:#333336;transform:scaleX(1.165)">80</span><span class="t" style="left:699.0px;top:719.00px;font-size:12.50px;font-weight:400;color:#333336;transform:scaleX(1.165)">70</span><span class="t" style="left:699.0px;top:764.00px;font-size:12.50px;font-weight:400;color:#333336;transform:scaleX(1.165)">60</span><span class="t" style="left:699.0px;top:809.00px;font-size:12.50px;font-weight:400;color:#333336;transform:scaleX(1.165)">50</span><span class="t" style="left:699.0px;top:854.00px;font-size:12.50px;font-weight:400;color:#333336;transform:scaleX(1.165)">40</span><span class="t" style="left:699.0px;top:899.00px;font-size:12.50px;font-weight:400;color:#333336;transform:scaleX(1.165)">30</span><span class="t" style="left:699.0px;top:944.00px;font-size:12.50px;font-weight:400;color:#333336;transform:scaleX(1.093)">20</span><span class="t" style="left:699.0px;top:989.00px;font-size:12.50px;font-weight:400;color:#333336;transform:scaleX(1.007)">10</span><span class="t" style="left:699.0px;top:1034.00px;font-size:12.50px;font-weight:400;color:#333336;transform:scaleX(1.151)">0</span><span class="t" style="left:702.1px;top:1066.00px;font-size:13.23px;font-weight:400;color:#333336;transform:scaleX(1.113)">6/1/2024</span><span class="t" style="left:861.4px;top:1066.00px;font-size:13.23px;font-weight:400;color:#333336;transform:scaleX(1.137)">6/4/2024</span><span class="t" style="left:1012.6px;top:1066.00px;font-size:13.23px;font-weight:400;color:#333336;transform:scaleX(1.121)">6/7/2024</span><span class="t" style="left:1174.8px;top:1066.00px;font-size:13.23px;font-weight:400;color:#333336;transform:scaleX(1.127)">6/10/2024</span><span class="t" style="left:1322.8px;top:1066.00px;font-size:13.23px;font-weight:400;color:#333336;transform:scaleX(1.105)">6/13/2024</span><span class="t" style="left:1479.7px;top:1066.00px;font-size:13.23px;font-weight:400;color:#333336;transform:scaleX(1.109)">6/16/2024</span><span class="t" style="left:1636.3px;top:1066.00px;font-size:13.23px;font-weight:400;color:#333336;transform:scaleX(1.105)">6/19/2024</span><span class="t" style="left:1793.5px;top:1066.00px;font-size:13.23px;font-weight:400;color:#333336;transform:scaleX(1.104)">6/22/2024</span><span class="t" style="left:1949.5px;top:1066.00px;font-size:13.23px;font-weight:400;color:#333336;transform:scaleX(1.122)">6/25/2024</span><span class="t" style="left:2101.2px;top:1066.00px;font-size:13.23px;font-weight:400;color:#333336;transform:scaleX(1.131)">6/28/2024</span><span class="t" style="left:2259.3px;top:1066.00px;font-size:13.23px;font-weight:400;color:#333336;transform:scaleX(1.098)">7/1/2024</span><span class="t" style="left:711.4px;top:1193.00px;font-size:20.06px;font-weight:700;color:#2d2d2f;transform:scaleX(1.022)">Breakdown</span><span class="t" style="left:899.6px;top:1270.00px;font-size:16.28px;font-weight:400;-webkit-text-stroke:0.65px #2d2d2f;color:#2d2d2f;transform:scaleX(1.150)">6/2/2024</span><span class="t" style="left:1010.6px;top:1270.00px;font-size:16.28px;font-weight:400;-webkit-text-stroke:0.65px #2d2d2f;color:#2d2d2f;transform:scaleX(1.150)">6/3/2024</span><span class="t" style="left:1121.5px;top:1270.00px;font-size:16.28px;font-weight:400;-webkit-text-stroke:0.65px #2d2d2f;color:#2d2d2f;transform:scaleX(1.150)">6/4/2024</span><span class="t" style="left:1232.6px;top:1270.00px;font-size:16.28px;font-weight:400;-webkit-text-stroke:0.65px #2d2d2f;color:#2d2d2f;transform:scaleX(1.150)">6/5/2024</span><span class="t" style="left:1343.4px;top:1270.00px;font-size:16.28px;font-weight:400;-webkit-text-stroke:0.65px #2d2d2f;color:#2d2d2f;transform:scaleX(1.150)">6/6/2024</span><span class="t" style="left:1454.6px;top:1270.00px;font-size:16.28px;font-weight:400;-webkit-text-stroke:0.65px #2d2d2f;color:#2d2d2f;transform:scaleX(1.150)">6/7/2024</span><span class="t" style="left:1565.5px;top:1270.00px;font-size:16.28px;font-weight:400;-webkit-text-stroke:0.65px #2d2d2f;color:#2d2d2f;transform:scaleX(1.150)">6/8/2024</span><span class="t" style="left:1676.4px;top:1270.00px;font-size:16.28px;font-weight:400;-webkit-text-stroke:0.65px #2d2d2f;color:#2d2d2f;transform:scaleX(1.150)">6/9/2024</span><span class="t" style="left:1783.2px;top:1270.00px;font-size:16.28px;font-weight:400;-webkit-text-stroke:0.65px #2d2d2f;color:#2d2d2f;transform:scaleX(1.126)">6/10/2024</span><span class="t" style="left:1894.2px;top:1270.00px;font-size:16.28px;font-weight:400;-webkit-text-stroke:0.65px #2d2d2f;color:#2d2d2f;transform:scaleX(1.145)">6/11/2024</span><span class="t" style="left:2005.2px;top:1270.00px;font-size:16.28px;font-weight:400;-webkit-text-stroke:0.65px #2d2d2f;color:#2d2d2f;transform:scaleX(1.126)">6/12/2024</span><span class="t" style="left:2116.2px;top:1270.00px;font-size:16.28px;font-weight:400;-webkit-text-stroke:0.65px #2d2d2f;color:#2d2d2f;transform:scaleX(1.126)">6/13/2024</span><span class="t" style="left:2224.2px;top:1270.00px;font-size:16.28px;font-weight:400;-webkit-text-stroke:0.65px #2d2d2f;color:#2d2d2f;transform:scaleX(1.126)">6/14/2024</span><span class="t" style="left:926.2px;top:1335.00px;font-size:16.72px;font-weight:400;-webkit-text-stroke:0.35px #2d2d2f;color:#2d2d2f;transform:scaleX(1.054)">30</span><span class="t" style="left:1037.2px;top:1335.00px;font-size:16.72px;font-weight:400;-webkit-text-stroke:0.35px #2d2d2f;color:#2d2d2f;transform:scaleX(1.054)">45</span><span class="t" style="left:1148.1px;top:1335.00px;font-size:16.72px;font-weight:400;-webkit-text-stroke:0.35px #2d2d2f;color:#2d2d2f;transform:scaleX(1.054)">48</span><span class="t" style="left:1259.2px;top:1335.00px;font-size:16.72px;font-weight:400;-webkit-text-stroke:0.35px #2d2d2f;color:#2d2d2f;transform:scaleX(1.054)">42</span><span class="t" style="left:1370.0px;top:1335.00px;font-size:16.72px;font-weight:400;-webkit-text-stroke:0.35px #2d2d2f;color:#2d2d2f;transform:scaleX(1.054)">38</span><span class="t" style="left:1481.2px;top:1335.00px;font-size:16.72px;font-weight:400;-webkit-text-stroke:0.35px #2d2d2f;color:#2d2d2f;transform:scaleX(1.054)">42</span><span class="t" style="left:1592.1px;top:1335.00px;font-size:16.72px;font-weight:400;-webkit-text-stroke:0.35px #2d2d2f;color:#2d2d2f;transform:scaleX(1.054)">45</span><span class="t" style="left:1703.0px;top:1335.00px;font-size:16.72px;font-weight:400;-webkit-text-stroke:0.35px #2d2d2f;color:#2d2d2f;transform:scaleX(1.054)">70</span><span class="t" style="left:1814.1px;top:1335.00px;font-size:16.72px;font-weight:400;-webkit-text-stroke:0.35px #2d2d2f;color:#2d2d2f;transform:scaleX(1.054)">69</span><span class="t" style="left:1925.2px;top:1335.00px;font-size:16.72px;font-weight:400;-webkit-text-stroke:0.35px #2d2d2f;color:#2d2d2f;transform:scaleX(1.054)">72</span><span class="t" style="left:2036.2px;top:1335.00px;font-size:16.72px;font-weight:400;-webkit-text-stroke:0.35px #2d2d2f;color:#2d2d2f;transform:scaleX(1.054)">74</span><span class="t" style="left:2147.2px;top:1335.00px;font-size:16.72px;font-weight:400;-webkit-text-stroke:0.35px #2d2d2f;color:#2d2d2f;transform:scaleX(1.054)">80</span><span class="t" style="left:2255.2px;top:1335.00px;font-size:16.72px;font-weight:400;-webkit-text-stroke:0.35px #2d2d2f;color:#2d2d2f;transform:scaleX(1.054)">78</span><span class="t" style="left:926.2px;top:1397.00px;font-size:16.42px;font-weight:400;-webkit-text-stroke:0.35px #2d2d2f;color:#2d2d2f;transform:scaleX(1.074)">28</span><span class="t" style="left:1037.2px;top:1397.00px;font-size:16.42px;font-weight:400;-webkit-text-stroke:0.35px #2d2d2f;color:#2d2d2f;transform:scaleX(1.074)">33</span><span class="t" style="left:1148.1px;top:1397.00px;font-size:16.42px;font-weight:400;-webkit-text-stroke:0.35px #2d2d2f;color:#2d2d2f;transform:scaleX(1.074)">35</span><span class="t" style="left:1259.2px;top:1397.00px;font-size:16.42px;font-weight:400;-webkit-text-stroke:0.35px #2d2d2f;color:#2d2d2f;transform:scaleX(1.074)">31</span><span class="t" style="left:1370.0px;top:1397.00px;font-size:16.42px;font-weight:400;-webkit-text-stroke:0.35px #2d2d2f;color:#2d2d2f;transform:scaleX(1.074)">27</span><span class="t" style="left:1481.2px;top:1397.00px;font-size:16.42px;font-weight:400;-webkit-text-stroke:0.35px #2d2d2f;color:#2d2d2f;transform:scaleX(1.074)">32</span><span class="t" style="left:1592.1px;top:1397.00px;font-size:16.42px;font-weight:400;-webkit-text-stroke:0.35px #2d2d2f;color:#2d2d2f;transform:scaleX(1.074)">34</span><span class="t" style="left:1703.0px;top:1397.00px;font-size:16.42px;font-weight:400;-webkit-text-stroke:0.35px #2d2d2f;color:#2d2d2f;transform:scaleX(1.074)">61</span><span class="t" style="left:1814.1px;top:1397.00px;font-size:16.42px;font-weight:400;-webkit-text-stroke:0.35px #2d2d2f;color:#2d2d2f;transform:scaleX(1.074)">63</span><span class="t" style="left:1925.2px;top:1397.00px;font-size:16.42px;font-weight:400;-webkit-text-stroke:0.35px #2d2d2f;color:#2d2d2f;transform:scaleX(1.074)">62</span><span class="t" style="left:2036.2px;top:1397.00px;font-size:16.42px;font-weight:400;-webkit-text-stroke:0.35px #2d2d2f;color:#2d2d2f;transform:scaleX(1.074)">62</span><span class="t" style="left:2147.2px;top:1397.00px;font-size:16.42px;font-weight:400;-webkit-text-stroke:0.35px #2d2d2f;color:#2d2d2f;transform:scaleX(1.074)">67</span><span class="t" style="left:2255.2px;top:1397.00px;font-size:16.42px;font-weight:400;-webkit-text-stroke:0.35px #2d2d2f;color:#2d2d2f;transform:scaleX(1.074)">70</span><span class="t" style="left:729.5px;top:1337.00px;font-size:17.44px;font-weight:700;color:#2d2d2f;transform:scaleX(0.880)">Emails sent</span><span class="t" style="left:729.5px;top:1400.00px;font-size:17.15px;font-weight:700;color:#2d2d2f;transform:scaleX(0.894)">Emails opened</span>
<div class="a" style="left:45.2px;top:0;width:2345.8px;height:1430.6px;border:5px solid #0b5286;border-top-width:4.7px;border-radius:32px"></div>
<div class="a" style="left:0;top:1430.6px;width:2391px;height:62px;"></div>
</body></html>
